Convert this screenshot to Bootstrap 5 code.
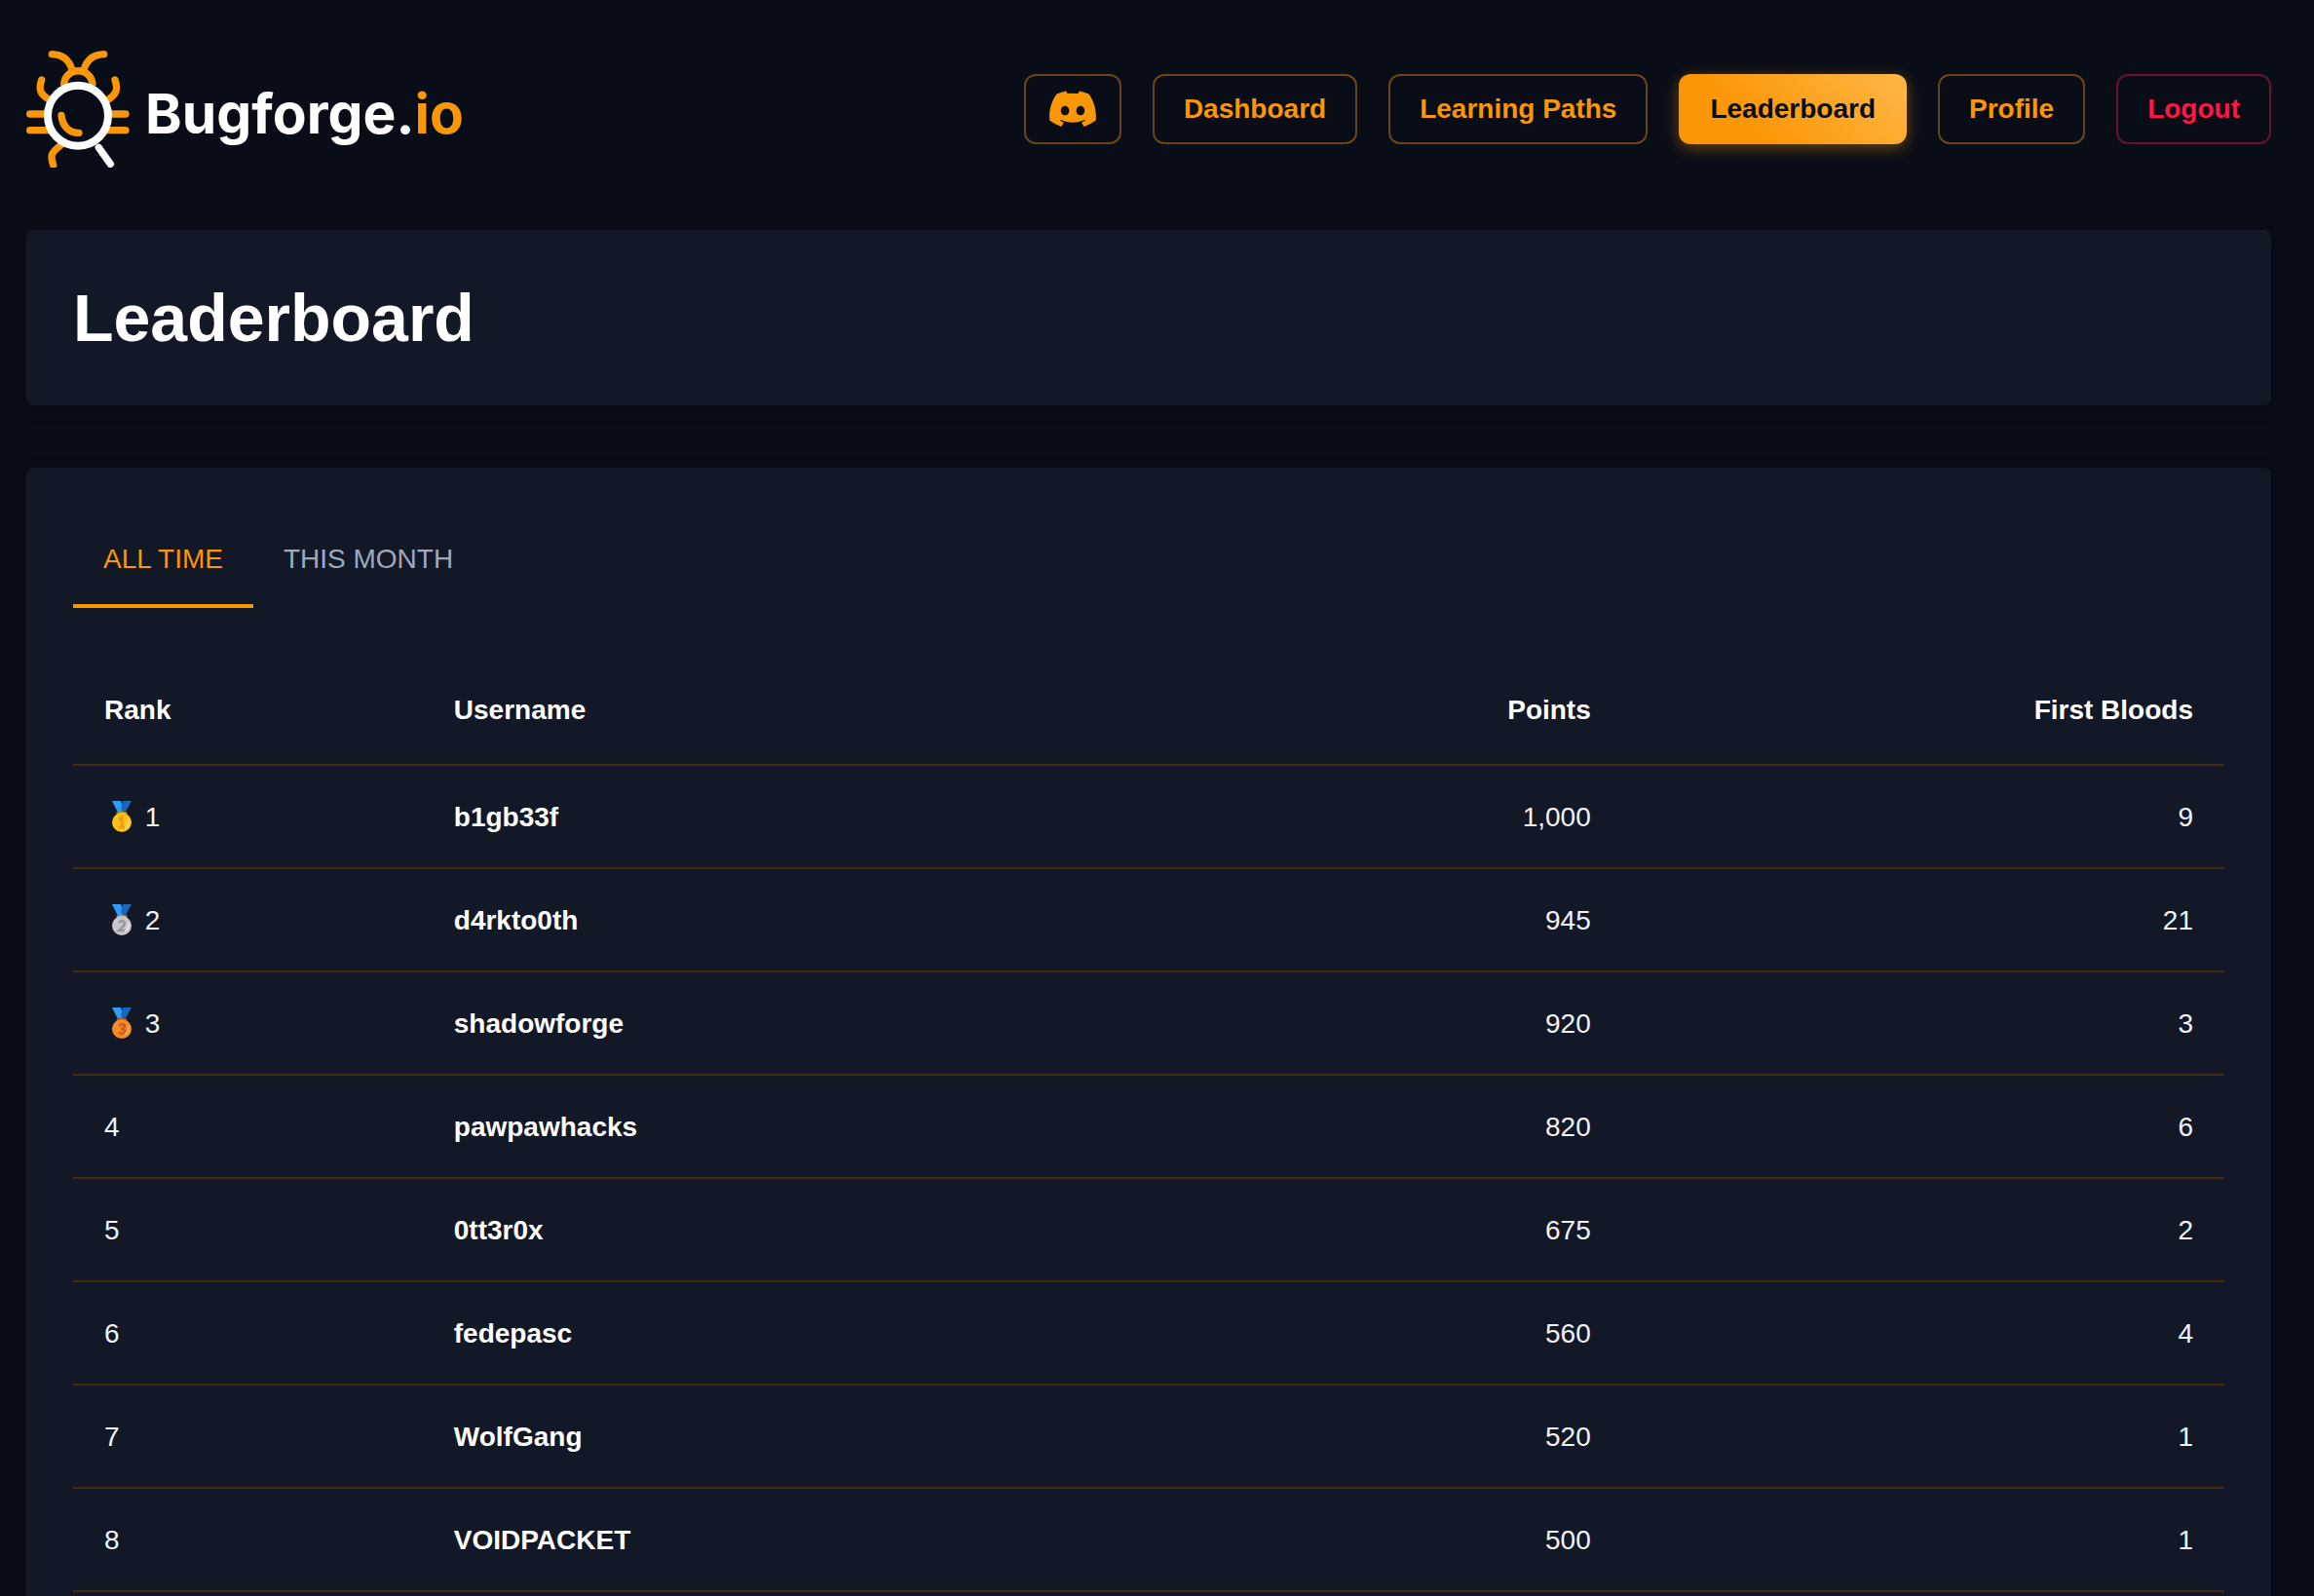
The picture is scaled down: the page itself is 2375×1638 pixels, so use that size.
<!DOCTYPE html>
<html lang="en" data-bs-theme="dark">
<head>
<meta charset="utf-8">
<meta name="viewport" content="width=device-width, initial-scale=1">
<title>Leaderboard - Bugforge.io</title>
<link href="https://cdn.jsdelivr.net/npm/bootstrap@5.3.0/dist/css/bootstrap.min.css" rel="stylesheet">
<style>
  :root { --forge: #fb9606; --page: #090d18; --panel: #131827; --rule: #432a10; }
  body { background: var(--page); color: #fff; font-family: "Liberation Sans", Arial, sans-serif; font-size: 28px; line-height: 40px; }
  .app-shell { padding: 52px 44px 0 27px; }
  .app-header { gap: 32px; margin-bottom: 64px; }
  .brand-link { gap: 16px; color: #fff; font: 700 57px/72px "Inter", sans-serif; }
  .brand-name { padding-top: 9px; }
  .brand-name span { color: var(--forge); }
  .top-nav { gap: 32px; }
  .btn-forge { --bs-btn-font-size: 28px; --bs-btn-font-weight: 700; --bs-btn-line-height: 40px;
    --bs-btn-padding-x: 30px; --bs-btn-padding-y: 14px; --bs-btn-border-width: 2px; --bs-btn-border-radius: 12px;
    --bs-btn-color: var(--forge); --bs-btn-border-color: #6b4513;
    --bs-btn-hover-color: var(--forge); --bs-btn-hover-border-color: var(--forge);
    --bs-btn-active-color: #0a0e1a; --bs-btn-active-border-color: transparent; }
  .btn-forge.active { background: linear-gradient(45deg, #fb9606 30%, #ffb340 90%) border-box; box-shadow: 0 4px 16px rgba(251, 150, 6, .4); }
  .btn-icon { --bs-btn-padding-x: 24px; }
  .btn-exit { --bs-btn-color: #ff1744; --bs-btn-border-color: #6b1230; --bs-btn-hover-color: #ff1744; --bs-btn-hover-border-color: #ff1744; }
  .panel { background: var(--panel); border-radius: 8px; padding: 48px; margin-bottom: 64px; box-shadow: 0 4px 16px rgba(0, 0, 0, .3); }
  .panel h1 { font-size: 68px; line-height: 84px; font-weight: 700; }
  .period-tabs { margin-bottom: 48px; }
  .period-tabs .nav-link { padding: 26px 31px; line-height: 40px; font-size: 28px; color: #a0a8bd; background: none; border: 0; border-bottom: 4px solid transparent; border-radius: 0; }
  .period-tabs .nav-link.active { color: var(--forge); border-bottom-color: #ff9800; }
  .board { --bs-table-bg: transparent; --bs-table-color: #f1f3f7; table-layout: fixed; border-collapse: separate; border-spacing: 0; }
  .board th, .board td { padding: 33px 32px 31px; border-bottom: 2px solid var(--rule); line-height: 40px; height: 106px; }
  .board thead th { line-height: 48px; color: #fff; }
  .board tbody th { color: #fff; }
  .col-rank { width: 16.25%; }
  .col-points { width: 20%; }
  .col-bloods { width: 28%; }
  .medal { width: 34px; height: 34px; vertical-align: -7px; }
</style>
<script src="https://cdn.jsdelivr.net/npm/bootstrap@5.3.0/dist/js/bootstrap.bundle.min.js"></script>
</head>
<body>
<div class="app-shell vh-100 overflow-hidden">
  <header class="app-header d-flex align-items-center justify-content-between">
    <a class="brand-link d-flex align-items-center text-decoration-none" href="#">
      <svg width="106" height="120" viewBox="81 66 318 360" fill="none" stroke="#fb9606" stroke-width="22" stroke-linecap="round" aria-hidden="true">
        <path d="M160 77Q208 78 222 125M320 77Q272 78 258 125"/>
        <path d="M197 168C203 115 278 115 285 168"/>
        <path d="M128 156C118 186 124 200 150 216M354 156C364 186 358 200 334 216"/>
        <path d="M92 261H140M92 311H150M340 261H387M336 311H387"/>
        <path d="M186 358C157 380 154 390 164 418"/>
        <path d="M189 265C192 300 215 320 243 319"/>
        <circle cx="240" cy="266" r="93" stroke="#fff" stroke-width="24"/>
        <path d="M304 364L340 415" stroke="#fff"/>
      </svg>
      <span class="brand-name">Bugforge.<span>io</span></span>
    </a>
    <nav class="top-nav d-flex align-items-center" aria-label="Main">
      <a class="btn btn-forge btn-icon d-flex align-items-center" href="#" aria-label="Discord">
        <svg width="48" height="40" viewBox="0 1.4 16 13.4" fill="currentColor" aria-hidden="true"><path d="M13.545 2.907a13.2 13.2 0 0 0-3.257-1.011.05.05 0 0 0-.052.025c-.141.25-.297.577-.406.833a12.2 12.2 0 0 0-3.658 0 8 8 0 0 0-.412-.833.05.05 0 0 0-.052-.025c-1.125.194-2.22.534-3.257 1.011a.04.04 0 0 0-.021.018C.356 6.024-.213 9.047.066 12.032q.003.022.021.037a13.3 13.3 0 0 0 3.995 2.02.05.05 0 0 0 .056-.019q.463-.63.818-1.329a.05.05 0 0 0-.01-.059l-.018-.011a9 9 0 0 1-1.248-.595.05.05 0 0 1-.02-.066l.015-.019q.127-.095.248-.195a.05.05 0 0 1 .051-.007c2.619 1.196 5.454 1.196 8.041 0a.05.05 0 0 1 .053.007q.121.1.248.195a.05.05 0 0 1-.004.085 8 8 0 0 1-1.249.594.05.05 0 0 0-.03.03.05.05 0 0 0 .003.041c.24.465.515.909.817 1.329a.05.05 0 0 0 .056.019 13.2 13.2 0 0 0 4.001-2.02.05.05 0 0 0 .021-.037c.334-3.451-.559-6.449-2.366-9.106a.03.03 0 0 0-.02-.019m-8.198 7.307c-.789 0-1.438-.724-1.438-1.612s.637-1.613 1.438-1.613c.807 0 1.45.73 1.438 1.613 0 .888-.637 1.612-1.438 1.612m5.316 0c-.788 0-1.438-.724-1.438-1.612s.637-1.613 1.438-1.613c.807 0 1.451.73 1.438 1.613 0 .888-.631 1.612-1.438 1.612"/></svg>
      </a>
      <a class="btn btn-forge" href="#">Dashboard</a>
      <a class="btn btn-forge" href="#">Learning Paths</a>
      <a class="btn btn-forge active" href="#" aria-current="page">Leaderboard</a>
      <a class="btn btn-forge" href="#">Profile</a>
      <button class="btn btn-forge btn-exit" type="button">Logout</button>
    </nav>
  </header>

  <main>
    <section class="panel"><h1 class="m-0">Leaderboard</h1></section>

    <section class="panel">
      <div class="period-tabs nav" role="tablist">
        <button class="nav-link active" type="button" role="tab" aria-selected="true" data-bs-toggle="tab" data-bs-target="#standings">ALL TIME</button>
        <button class="nav-link" type="button" role="tab" aria-selected="false">THIS MONTH</button>
      </div>
      <div id="standings" role="tabpanel">
        <table class="table board mb-0 align-middle">
          <thead>
            <tr><th class="col-rank" scope="col">Rank</th><th scope="col">Username</th><th class="col-points text-end" scope="col">Points</th><th class="col-bloods text-end" scope="col">First Bloods</th></tr>
          </thead>
          <tbody>
            <tr><td><svg class="medal" viewBox="0 0 34 34" role="img" aria-label="Gold medal"><path d="M8 1H17L21 11 14 13Z" fill="#2f9bf4"/><path d="M19 1H28L22 12 17 10Z" fill="#1767bd"/><path d="M12 13Q18 10 24 13L22 16H14Z" fill="#b98a06"/><circle cx="18" cy="23" r="10" fill="#fcc217"/><path d="M15 20L18 18V27M15 28H21" fill="none" stroke="#f19a1c" stroke-width="3"/><path d="M25 20Q26 26 21 29" fill="none" stroke="#ffe37f" stroke-width="1.5"/></svg> 1</td><th scope="row">b1gb33f</th><td class="text-end">1,000</td><td class="text-end">9</td></tr>
            <tr><td><svg class="medal" viewBox="0 0 34 34" role="img" aria-label="Silver medal"><path d="M8 1H17L21 11 14 13Z" fill="#2f9bf4"/><path d="M19 1H28L22 12 17 10Z" fill="#1767bd"/><path d="M12 13Q18 10 24 13L22 16H14Z" fill="#8d8d8d"/><circle cx="18" cy="23" r="10" fill="#c8c8ca"/><path d="M15 20Q19 16 21 20Q21 23 15 28H22" fill="none" stroke="#98989c" stroke-width="2.5"/><path d="M25 20Q26 26 21 29" fill="none" stroke="#e8e8e8" stroke-width="1.5"/></svg> 2</td><th scope="row">d4rkto0th</th><td class="text-end">945</td><td class="text-end">21</td></tr>
            <tr><td><svg class="medal" viewBox="0 0 34 34" role="img" aria-label="Bronze medal"><path d="M8 1H17L21 11 14 13Z" fill="#2f9bf4"/><path d="M19 1H28L22 12 17 10Z" fill="#1767bd"/><path d="M12 13Q18 10 24 13L22 16H14Z" fill="#a8501a"/><circle cx="18" cy="23" r="10" fill="#f6892c"/><path d="M15 19Q21 17 21 20T17 23Q22 23 21 26T15 27" fill="none" stroke="#d65e13" stroke-width="2.5"/><path d="M25 20Q26 26 21 29" fill="none" stroke="#ffb56b" stroke-width="1.5"/></svg> 3</td><th scope="row">shadowforge</th><td class="text-end">920</td><td class="text-end">3</td></tr>
            <tr><td>4</td><th scope="row">pawpawhacks</th><td class="text-end">820</td><td class="text-end">6</td></tr>
            <tr><td>5</td><th scope="row">0tt3r0x</th><td class="text-end">675</td><td class="text-end">2</td></tr>
            <tr><td>6</td><th scope="row">fedepasc</th><td class="text-end">560</td><td class="text-end">4</td></tr>
            <tr><td>7</td><th scope="row">WolfGang</th><td class="text-end">520</td><td class="text-end">1</td></tr>
            <tr><td>8</td><th scope="row">VOIDPACKET</th><td class="text-end">500</td><td class="text-end">1</td></tr>
          </tbody>
        </table>
      </div>
    </section>
  </main>
</div>
</body>
</html>
